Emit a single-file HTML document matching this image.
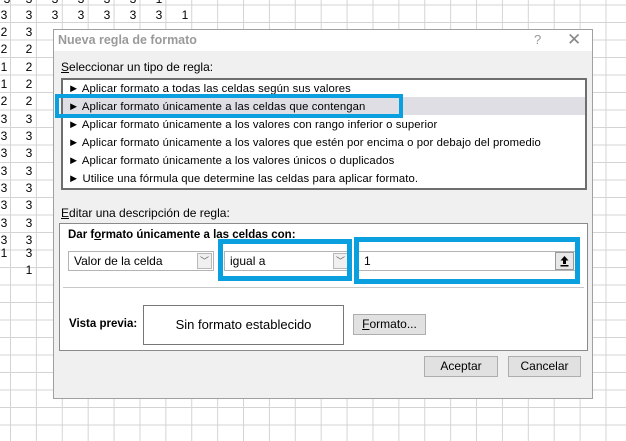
<!DOCTYPE html>
<html><head><meta charset="utf-8"><style>
*{margin:0;padding:0;box-sizing:border-box}
body{width:626px;height:441px;overflow:hidden;position:relative;font-family:"Liberation Sans",sans-serif;font-size:12px;color:#000;
background-color:#fff;
background-image:linear-gradient(to right,#d4d4d4 1px,transparent 1px),linear-gradient(to bottom,#d4d4d4 1px,transparent 1px);
background-size:25.9px 17.5px;background-position:10px 4.5px}
.a{position:absolute}
.cell{position:absolute;font-size:12px;width:14px;text-align:center}
.dlg{left:53px;top:29px;width:540px;height:370px;background:#f0f0f0;border:1px solid #a0a0a0}
.title{left:0;top:0;width:538px;height:21px;background:#fff}
.list{left:7px;top:48px;width:526px;height:112px;background:#fff;border:2px solid #6e6e6e}
.item{position:absolute;left:5px;height:18px;line-height:18px;font-size:11.3px;white-space:nowrap;letter-spacing:0.1px}
.blue{position:absolute;border:5px solid #0aa0e0}
.combo{position:absolute;background:#fff;border:1px solid #b4b4b4;height:20px;line-height:18px;padding-left:5px;font-size:12px}
.dd{position:absolute;right:1px;top:1px;width:15px;height:16px;border:1px solid #b8b8b8;background:#f0f0f0;font-size:9px;line-height:14px;text-align:center;color:#666}
.btn{position:absolute;background:#e1e1e1;border:1px solid #adadad;height:21px;line-height:19px;text-align:center;font-size:12px}
</style></head><body>
<div class="cell" style="left:0;top:-8px">3</div><div class="cell" style="left:22px;top:-8px">3</div><div class="cell" style="left:48px;top:-8px">3</div><div class="cell" style="left:74px;top:-8px">3</div><div class="cell" style="left:100px;top:-8px">3</div><div class="cell" style="left:126px;top:-8px">3</div><div class="cell" style="left:152px;top:-8px">1</div>
<div class="cell" style="left:-3px;top:8px">3</div><div class="cell" style="left:22px;top:8px">3</div><div class="cell" style="left:48px;top:8px">3</div><div class="cell" style="left:74px;top:8px">3</div><div class="cell" style="left:100px;top:8px">3</div><div class="cell" style="left:126px;top:8px">3</div><div class="cell" style="left:152px;top:8px">3</div><div class="cell" style="left:178px;top:8px">1</div>
<div class="cell" style="left:-3px;top:25px">2</div><div class="cell" style="left:22px;top:25px">3</div>
<div class="cell" style="left:-3px;top:42px">2</div><div class="cell" style="left:22px;top:42px">2</div>
<div class="cell" style="left:-3px;top:60px">1</div><div class="cell" style="left:22px;top:60px">2</div>
<div class="cell" style="left:-3px;top:77px">1</div><div class="cell" style="left:22px;top:77px">2</div>
<div class="cell" style="left:-3px;top:94px">2</div><div class="cell" style="left:22px;top:94px">2</div>
<div class="cell" style="left:-3px;top:112px">3</div><div class="cell" style="left:22px;top:112px">3</div>
<div class="cell" style="left:-3px;top:129px">3</div><div class="cell" style="left:22px;top:129px">3</div>
<div class="cell" style="left:-3px;top:146px">3</div><div class="cell" style="left:22px;top:146px">3</div>
<div class="cell" style="left:-3px;top:164px">3</div><div class="cell" style="left:22px;top:164px">3</div>
<div class="cell" style="left:-3px;top:181px">3</div><div class="cell" style="left:22px;top:181px">3</div>
<div class="cell" style="left:-3px;top:198px">3</div><div class="cell" style="left:22px;top:198px">3</div>
<div class="cell" style="left:-3px;top:216px">3</div><div class="cell" style="left:22px;top:216px">3</div>
<div class="cell" style="left:-3px;top:233px">3</div><div class="cell" style="left:22px;top:233px">3</div>
<div class="cell" style="left:-3px;top:246px">1</div><div class="cell" style="left:22px;top:246px">3</div>
<div class="cell" style="left:22px;top:263px">1</div>

<div class="a dlg">
 <div class="a title"><span class="a" style="left:4px;top:3px;font-weight:bold;color:#9a9a9a;font-size:12.5px">Nueva regla de formato</span>
  <span class="a" style="left:480px;top:2px;color:#999;font-size:13px">?</span>
  <span class="a" style="left:513px;top:0px;color:#888;font-size:17px">✕</span></div>
 <div class="a" style="left:7px;top:30px;font-size:12px"><u>S</u>eleccionar un tipo de regla:</div>
 <div class="a list">
  <div class="a" style="left:0;top:17px;width:522px;height:18px;background:#dedee4"></div>
  <div class="item" style="top:0">► Aplicar formato a todas las celdas según sus valores</div>
  <div class="item" style="top:18px">► Aplicar formato únicamente a las celdas que contengan</div>
  <div class="item" style="top:36px">► Aplicar formato únicamente a los valores con rango inferior o superior</div>
  <div class="item" style="top:54px">► Aplicar formato únicamente a los valores que estén por encima o por debajo del promedio</div>
  <div class="item" style="top:72px">► Aplicar formato únicamente a los valores únicos o duplicados</div>
  <div class="item" style="top:90px">► Utilice una fórmula que determine las celdas para aplicar formato.</div>
 </div>
 <div class="a" style="left:7px;top:176px"><u>E</u>ditar una descripción de regla:</div>
 <div class="a" style="left:5px;top:193px;width:529px;height:128px;background:#fff;border:1px solid #8a8a8a">
  <div class="a" style="left:8px;top:5px;font-weight:bold;font-size:11.5px">Dar f<u>o</u>rmato únicamente a las celdas con:</div>
  <div class="combo" style="left:8px;top:27px;width:146px">Valor de la celda<div class="dd">﹀</div></div>
  <div class="combo" style="left:164px;top:27px;width:126px">igual a<div class="dd">﹀</div></div>
  <div class="combo" style="left:298px;top:27px;width:218px">1<div class="a" style="right:1px;top:0px;width:19px;height:18px;border:1px solid #999;background:#e8e8e8;text-align:center;font-weight:bold;font-size:12px;line-height:16px"><svg width="11" height="12" viewBox="0 0 11 12" style="margin-top:2px"><path d="M5.5 1 L1.5 5.5 H4 V9 H7 V5.5 H9.5 Z" fill="#000"/><rect x="1.5" y="10" width="8" height="1.5" fill="#000"/></svg></div></div>
  <div class="a" style="left:3px;top:63px;width:521px;height:1px;background:#c8c8c8"></div>
  <div class="a" style="left:9px;top:94px;font-weight:bold;font-size:11.5px">Vista previa:</div>
  <div class="a" style="left:83px;top:81px;width:201px;height:40px;border:1px solid #777;text-align:center;line-height:38px;font-size:13px">Sin formato establecido</div>
  <div class="btn" style="left:293px;top:90px;width:73px"><u>F</u>ormato...</div>
 </div>
 <div class="btn" style="left:370px;top:326px;width:74px">Aceptar</div>
 <div class="btn" style="left:454px;top:326px;width:73px">Cancelar</div>
</div>
<div class="blue" style="left:55px;top:94px;width:348px;height:24px;border-width:4px"></div>
<div class="blue" style="left:218px;top:239px;width:134px;height:42px"></div>
<div class="blue" style="left:354px;top:237px;width:226px;height:47px"></div>
</body></html>
